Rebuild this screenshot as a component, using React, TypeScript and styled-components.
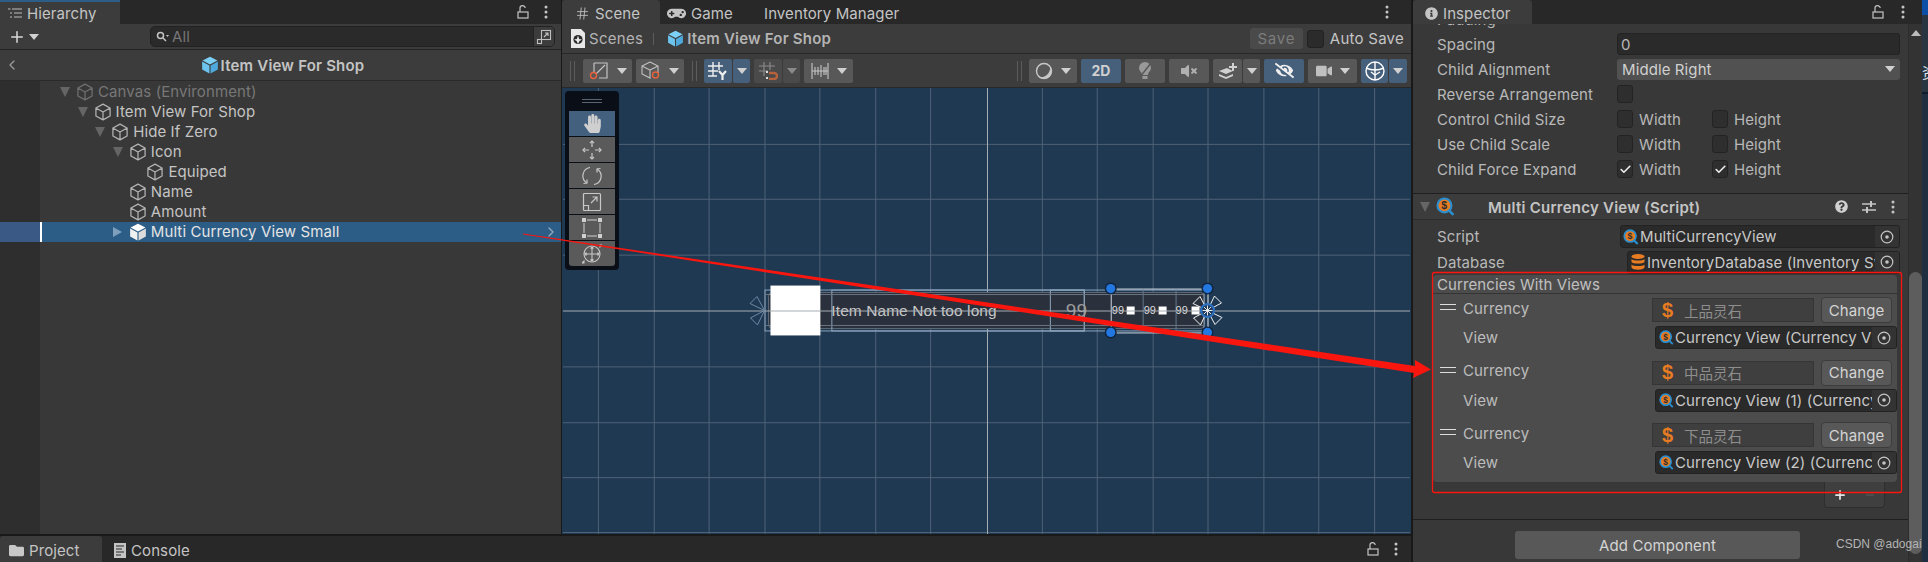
import React from "react";
import styled, { createGlobalStyle } from "styled-components";
import { FaHandPaper, FaEyeSlash, FaVideo, FaVolumeMute, FaGamepad, FaInfoCircle, FaFolder, FaQuestionCircle } from "react-icons/fa";
import { Hash, Plus, Minus, ChevronLeft, ChevronRight, Check } from "lucide-react";

const Global = createGlobalStyle`
  html, body { margin: 0; padding: 0; background: #191919; }
  body { font-family: Inter, "Noto Sans CJK SC", "Liberation Sans", sans-serif; }
  * { box-sizing: border-box; }
`;

const Page = styled.div`
  position: relative; width: 1928px; height: 562px; display: flex; overflow: hidden;
  color: #c4c4c4; font-size: 15px; letter-spacing: 0.1px; background: #191919;
`;
const Workspace = styled.div`width: 1411px; display: flex; flex-direction: column; flex: none;`;
const TopArea = styled.div`height: 534px; display: flex; gap: 1px; flex: none;`;
const TabStrip = styled.div`height: 24px; background: #282828; display: flex; align-items: stretch; flex: none; position: relative;`;
const Tab = styled.div<{ $w: number; $active?: boolean; $accent?: boolean; $pad?: number }>`
  width: ${p => p.$w}px; background: ${p => (p.$active ? "#3c3c3c" : "transparent")};
  display: flex; align-items: center; gap: 5px; padding-left: ${p => p.$pad ?? 8}px;
  border-top: 2px solid ${p => (p.$accent ? "#2c5d87" : "transparent")};
  border-radius: ${p => (p.$accent ? "0" : "3px 3px 0 0")}; white-space: nowrap; color: #c4c4c4; flex: none;
  svg { flex: none; }
`;
const TabActions = styled.div<{ $right: number; $gap: number }>`
  margin-left: auto; display: flex; align-items: center; gap: ${p => p.$gap}px; padding-right: ${p => p.$right}px;
`;
const HierarchyPanel = styled.section`width: 561px; display: flex; flex-direction: column; background: #383838; flex: none;`;
const HierarchyBar = styled.div`height: 26px; background: #3c3c3c; border-bottom: 1px solid #232323; display: flex; align-items: center; padding: 0 6px 0 8px; flex: none;`;
const AddMenu = styled.div`display: flex; align-items: center; gap: 3px; width: 142px; color: #d8d8d8;`;
const SearchBox = styled.div`
  flex: 1; height: 21px; background: #2a2a2a; border: 1px solid #222; border-radius: 5px; display: flex; align-items: center;
  padding-left: 5px; gap: 3px; color: #767676; overflow: hidden;
`;
const SearchAction = styled.div`margin-left: auto; width: 21px; height: 19px; background: #3c3c3c; border-left: 1px solid #222; display: flex; align-items: center; justify-content: center;`;
const BreadcrumbBar = styled.div`
  height: 31px; display: grid; grid-template-columns: 1fr auto 1fr; align-items: center; background: #3c3c3c; border-bottom: 1px solid #2a2a2a;
  padding-left: 4px; flex: none; font-weight: 600; letter-spacing: 0.2px; color: #c4c4c4;
`;
const Crumb = styled.div`display: flex; align-items: center; gap: 2px;`;
const TreeArea = styled.div`flex: 1; display: flex; flex-direction: column; background: linear-gradient(90deg, #2e2e2e 40px, #383838 40px); padding-top: 1px;`;
const TreeRow = styled.div<{ $depth: number; $selected?: boolean; $dim?: boolean }>`
  height: 20px; display: flex; align-items: center; padding-left: ${p => 60 + p.$depth * 17.6}px; position: relative;
  color: ${p => (p.$selected ? "#e4e4e4" : p.$dim ? "#777" : "#c4c4c4")};
  background: ${p => (p.$selected ? "linear-gradient(90deg, #3a5a85 40px, #fff 40px, #fff 42px, #2c5d87 42px)" : "transparent")};
  flex: none;
`;
const Arrow = styled.span<{ $open?: boolean; $color?: string; $hidden?: boolean }>`
  width: 16px; height: 10px; flex: none; position: relative; visibility: ${p => (p.$hidden ? "hidden" : "visible")};
  &::before { content: ""; position: absolute; left: 0; top: 0; border-style: solid;
    border-width: ${p => (p.$open ? "10px 5px 0 5px" : "5px 0 5px 9px")};
    border-color: ${p => (p.$open ? `${p.$color ?? "#656565"} transparent transparent transparent` : `transparent transparent transparent ${p.$color ?? "#656565"}`)}; }
`;
const RowLabel = styled.span`margin-left: 4px; white-space: nowrap; position: relative; top: -1px;`;
const RowChevron = styled.span`position: absolute; right: 2px; top: 2px; color: #93a9bd; display: flex;`;
const ScenePanel = styled.section`width: 849px; display: flex; flex-direction: column; flex: none;`;
const SceneCrumbs = styled.div`height: 30px; background: #3c3c3c; display: flex; align-items: center; padding-left: 8px; flex: none; border-bottom: 1px solid #282828;`;
const CrumbText = styled.span<{ $bold?: boolean; $ml: number }>`font-weight: ${p => (p.$bold ? 600 : 400)}; color: #b4b4b4; margin-left: ${p => p.$ml}px; letter-spacing: ${p => (p.$bold ? 0.2 : 0.3)}px; white-space: nowrap;`;
const CrumbDivider = styled.span`width: 1px; height: 12px; background: #5c5c5c; margin: 0 13px 0 10px;`;
const SaveGroup = styled.div`margin-left: auto; display: flex; align-items: center; padding-right: 7px;`;
const SaveButton = styled.div`width: 53px; height: 21px; background: #4a4a4a; border-radius: 3px; color: #7c7c7c; display: flex; align-items: center; justify-content: center; margin-right: 4px; letter-spacing: 0.8px;`;
const AutoBox = styled.div`width: 17px; height: 18px; background: #2b2b2b; border: 1px solid #222; border-radius: 3px; margin-right: 6px;`;
const AutoLabel = styled.span`letter-spacing: 0.25px; white-space: nowrap;`;
const SceneToolbar = styled.div`height: 34px; background: #3c3c3c; display: flex; align-items: center; justify-content: space-between; padding: 0 4px 0 8px; flex: none; border-bottom: 1px solid #282828;`;
const ToolGroup = styled.div`display: flex; align-items: center; gap: 4px;`;
const Grip = styled.span<{ $ml?: number; $mr?: number }>`width: 5px; height: 20px; border-left: 1px solid #5c5c5c; border-right: 1px solid #5c5c5c; margin-left: ${p => p.$ml ?? 0}px; margin-right: ${p => p.$mr ?? 0}px;`;
const ToolButton = styled.div<{ $w: number; $active?: boolean; $dark?: boolean }>`
  width: ${p => p.$w}px; height: 24px; border-radius: 2px; display: flex; align-items: center; justify-content: center; gap: 8px; flex: none;
  background: ${p => (p.$active ? "#46607c" : p.$dark ? "#4a4a4a" : "#585858")}; color: #d0d0d0; font-weight: 700; font-size: 14px;
`;
const SplitPair = styled.div`display: flex; gap: 1px;`;
const Caret = styled.span<{ $dim?: boolean }>`width: 0; height: 0; border-style: solid; border-width: 6px 5px 0 5px; border-color: ${p => (p.$dim ? "#8a8a8a" : "#d0d0d0")} transparent transparent transparent;`;
const SceneView = styled.div`flex: 1; position: relative; background: #1f3953; overflow: hidden;`;
const SceneCanvas = styled.svg`position: absolute; inset: 0; width: 100%; height: 100%;`;
const Overlay = styled.div`
  position: absolute; left: 3px; top: 3px; width: 54px; height: 179px; background: #0a0e16; border-radius: 4px; padding: 8px 4px 4px;
  display: flex; flex-direction: column; gap: 1px;
`;
const OverlayGrip = styled.div`height: 4px; width: 20px; border-top: 1px solid #5c6470; border-bottom: 1px solid #5c6470; margin: 0 auto 7px; flex: none;`;
const OverlayTool = styled.div<{ $active?: boolean }>`
  height: 25px; background: ${p => (p.$active ? "#44607f" : "#5a5a5a")}; display: flex; align-items: center; justify-content: center; color: #c8c8c8; flex: none;
  &:first-of-type { border-radius: 3px 3px 0 0; } &:last-of-type { border-radius: 0 0 3px 3px; }
`;
const BottomTabs = styled.div`height: 28px; margin-top: 0; background: #282828; border-top: 2px solid #191919; display: flex; align-items: stretch; flex: none;`;
const Inspector = styled.section`width: 509px; flex: none; display: flex; flex-direction: column; background: #383838; margin-left: 2px;`;
const InspectorBody = styled.div`flex: 1; display: flex; min-height: 0;`;
const InspectorContent = styled.div`flex: 1; min-width: 0; overflow: hidden; display: flex; flex-direction: column;`;
const PropRow = styled.div<{ $first?: boolean }>`
  height: 25px; display: flex; align-items: center; padding: 0 8px 3px 24px; flex: none; margin-top: ${p => (p.$first ? -16 : 0)}px; color: #b8b8b8;
`;
const PropLabel = styled.span`width: 180px; flex: none; white-space: nowrap;`;
const NumberField = styled.div`flex: 1; height: 22px; background: #2a2a2a; border: 1px solid #222; border-radius: 3px; padding-left: 3px; display: flex; align-items: center;`;
const Dropdown = styled.div`flex: 1; height: 21px; background: #515151; border-radius: 3px; padding: 0 5px 0 5px; display: flex; align-items: center; justify-content: space-between; color: #d0d0d0;`;
const CheckBox = styled.div`width: 16px; height: 18px; background: #2e2e2e; border: 1px solid #232323; border-radius: 3px; display: flex; align-items: center; justify-content: center; color: #eee; flex: none;`;
const CheckLabel = styled.span<{ $w: number }>`margin-left: 6px; width: ${p => p.$w}px; flex: none;`;
const ComponentHeader = styled.div`
  height: 27px; margin-top: 10px; border-top: 1px solid #1f1f1f; border-bottom: 1px solid #2e2e2e; background: #3c3c3c; display: flex; align-items: center; padding-left: 7px; flex: none; font-weight: 600; color: #c4c4c4; letter-spacing: 0.25px;
`;
const HeaderTitle = styled.span`margin-left: 33px; flex: 1; white-space: nowrap; position: relative; top: 1px;`;
const HeaderIcons = styled.div`display: flex; align-items: center; gap: 14px; padding-right: 12px;`;
const ScriptRow = styled.div<{ $h: number; $mt?: number }>`height: ${p => p.$h}px; margin-top: ${p => p.$mt ?? 0}px; display: flex; align-items: center; padding: 0 8px 0 24px; flex: none; color: #b8b8b8;`;
const ObjectField = styled.div<{ $offset?: number; $w?: number }>`
  ${p => (p.$w ? `width:${p.$w}px; margin-left:auto; flex:none;` : `flex:1; margin-left:${p.$offset ?? 0}px; min-width:0;`)}
  height: 23px; background: #2a2a2a; border: 1px solid #222; border-radius: 3px; display: flex; align-items: center; overflow: hidden; color: #c8c8c8;
`;
const ObjectIcon = styled.span`flex: none; width: 19px; display: flex; justify-content: center; padding-left: 1px;`;
const ObjectName = styled.span`flex: 1; min-width: 0; white-space: nowrap; overflow: hidden;`;
const TargetSlot = styled.span`flex: none; width: 24px; height: 100%; background: #333; display: flex; align-items: center; justify-content: center;`;
const ListBox = styled.div`margin: 2px 11px 0 20px; height: 207px; background: #4c4c4c; border-radius: 4px; flex: none; display: flex; flex-direction: column;`;
const ListHeader = styled.div`height: 19px; border-bottom: 1px solid #343434; padding-left: 4px; display: flex; align-items: center; flex: none; color: #c0c0c0;`;
const ListBody = styled.div`padding-top: 3px; display: flex; flex-direction: column; gap: 10.5px;`;
const ListElement = styled.div`display: flex; flex-direction: column; gap: 3px;`;
const CurrencyRow = styled.div`height: 26px; display: flex; align-items: center; padding: 0 5px 0 7px; color: #bcbcbc;`;
const CurrencyLabel = styled.span`position: relative; top: -2px;`;
const ViewRow = styled.div`height: 23px; display: flex; align-items: center; padding-left: 30px; color: #bcbcbc;`;
const DragHandle = styled.span`width: 16px; height: 6px; border-top: 1.5px solid #ddd; border-bottom: 1.5px solid #ddd; margin: 0 7px 6px 0; flex: none;`;
const CurrencyField = styled.div`width: 162px; height: 24px; margin-left: auto; background: #3f3f3f; border: 1px solid #353535; display: flex; align-items: center; padding-left: 9px; color: #8e8e8e; flex: none;`;
const DollarSign = styled.span`color: #e87c22; font: 700 20px "Liberation Sans", sans-serif; width: 22px; flex: none;`;
const CurrencyName = styled.span`font-size: 14.5px; letter-spacing: 0; font-family: "Noto Sans CJK SC", sans-serif;`;
const ChangeButton = styled.div`width: 71px; height: 26px; margin-left: 7px; background: #585858; border: 1px solid #3c3c3c; border-radius: 4px; display: flex; align-items: center; justify-content: center; color: #d4d4d4; flex: none;`;
const ListFooter = styled.div`width: 61px; height: 26px; margin-left: 411px; background: #3f3f3f; border: 1px solid #2e2e2e; border-top: none; border-radius: 0 0 4px 4px; display: flex; align-items: center; justify-content: space-around; flex: none; color: #e4e4e4;`;
const FooterRule = styled.div`height: 1px; background: #1f1f1f; margin-top: 11px; flex: none;`;
const AddRow = styled.div`flex: 1; display: flex; padding: 11px 0 0 102px;`;
const AddButton = styled.div`width: 285px; height: 28px; background: #585858; border-radius: 3px; display: flex; align-items: center; justify-content: center; color: #d4d4d4;`;
const Watermark = styled.span`position: absolute; left: 1836px; top: 537px; font: 12px "Liberation Sans", sans-serif; color: #b4b4b4; letter-spacing: 0; white-space: nowrap;`;
const Scrollbar = styled.div`width: 14px; flex: none; background: #333; border-left: 1px solid #2d2d2d; display: flex; flex-direction: column; align-items: center; padding-top: 6px; position: relative;`;
const ScrollUp = styled.span`width: 0; height: 0; border-style: solid; border-width: 0 5px 6px 5px; border-color: transparent transparent #bcbcbc transparent;`;
const ScrollThumb = styled.div`position: absolute; left: 0; right: 0; top: 248px; bottom: 8px; background: #5d5d5d; border-radius: 7px;`;
const DesktopEdge = styled.div`flex: 1; background: linear-gradient(180deg, #0d4ea6 0, #0d4ea6 15px, #2a3542 15px, #2a3542 92px, #0f1c2c 92px, #0f1c2c 94px, #202e42 94px); position: relative;`;
const EdgeGlyph = styled.span`position: absolute; left: 0; top: 62px; width: 8px; overflow: hidden; color: #dfe6ee; font: 15px "Noto Sans CJK SC", sans-serif; line-height: 20px; white-space: nowrap;`;
const Annotation = styled.svg`position: absolute; left: 0; top: 0; width: 1928px; height: 562px; pointer-events: none;`;

const Cube = ({ size = 18, color = "#b4b4b4" }: { size?: number; color?: string }) => (
  <svg width={size} height={size} viewBox="0 0 16 16" fill="none" stroke={color} strokeWidth="1.1" style={{ flex: "none" }}>
    <path d="M8 1 14.3 4.4V11.6L8 15 1.7 11.6V4.4Z M1.7 4.4 8 8 14.3 4.4 M8 8V15" strokeLinejoin="round" />
  </svg>
);
const FilledCube = ({ size = 18, top = "#7dd0f5", left = "#6cc4ee", right = "#4fa9dc" }: { size?: number; top?: string; left?: string; right?: string }) => (
  <svg width={size} height={size} viewBox="0 0 16 16" style={{ flex: "none" }}>
    <path d="M8 .6 14.6 4 8 7.5 1.4 4Z" fill={top} />
    <path d="M1 4.9 7.5 8.4V15.6L1 12Z" fill={left} />
    <path d="M15 4.9 8.5 8.4V15.6L15 12Z" fill={right} />
  </svg>
);
const Kebab = ({ color = "#c4c4c4" }: { color?: string }) => (
  <svg width="6" height="14" viewBox="0 0 6 14" fill={color} style={{ flex: "none" }}><circle cx="3" cy="2" r="1.5" /><circle cx="3" cy="7" r="1.5" /><circle cx="3" cy="12" r="1.5" /></svg>
);
const Lock = () => (
  <svg width="12" height="14" viewBox="0 0 12 14" fill="none" stroke="#c4c4c4" strokeWidth="1.2"><rect x="1" y="7" width="10" height="6" /><path d="M3 7V3.5A2.6 2.6 0 0 1 8.2 3" /></svg>
);
const HierarchyIcon = () => (
  <svg width="14" height="12" viewBox="0 0 14 12" stroke="#bbb" strokeWidth="1.2"><path d="M4 2H14M6 6H14M6 10H14" /><path d="M0 2H2.5M2 6H4M2 10H4" /></svg>
);
const SearchIcon = () => (
  <svg width="13" height="12" viewBox="0 0 13 12" fill="none" stroke="#c4c4c4" strokeWidth="1.5"><circle cx="4.5" cy="4.5" r="3" /><path d="M7 7 10 10" /><path d="M10 4H13L11.5 6Z" fill="#c4c4c4" stroke="none" /></svg>
);
const ExpandIcon = () => (
  <svg width="16" height="16" viewBox="0 0 16 16" fill="none" stroke="#c0c0c0" strokeWidth="1.1"><rect x="5.5" y="1.5" width="9" height="9" /><rect x="1.5" y="10.5" width="4" height="4" /><path d="M8 8 12 4M9 4H12V7" /></svg>
);
const SceneFileIcon = () => (
  <svg width="16" height="19" viewBox="0 0 16 19"><path d="M1 0H11L15 4V19H1Z" fill="#e8e8e8" /><circle cx="8" cy="10.5" r="4.6" fill="#2a2a2a" /><path d="M8 6.5 9.2 10 12 10.6 9.5 12 8 15 6.6 12 4 10.6 6.8 10Z" fill="#e8e8e8" /></svg>
);
const RectOrangeIcon = () => (
  <svg width="20" height="18" viewBox="0 0 20 18" fill="none"><path d="M5 1H18V16H10" stroke="#c4c4c4" strokeWidth="1.2" /><path d="M5 1V10M7 12 16 3" stroke="#c4c4c4" strokeWidth="1.2" /><circle cx="4.5" cy="13.5" r="3" stroke="#e8623a" strokeWidth="1.4" /></svg>
);
const CubeOrangeIcon = () => (
  <svg width="20" height="19" viewBox="0 0 20 19" fill="none" stroke="#c4c4c4" strokeWidth="1.1"><path d="M9 1 17 5V12M9 9 17 5M9 1 1 5V13L9 17V9L1 5" /><circle cx="14.5" cy="14" r="3" stroke="#e8623a" strokeWidth="1.4" /></svg>
);
const GridYIcon = () => (
  <svg width="20" height="18" viewBox="0 0 20 18" fill="none" stroke="#eee" strokeWidth="1.4"><path d="M5 0V14M11 0V8M0 4H15M0 9H10M0 14H9" /><path d="M11 9 14.5 13 18 9M14.5 13V18" strokeWidth="2.2" /></svg>
);
const GridMagnetIcon = () => (
  <svg width="20" height="18" viewBox="0 0 20 18" fill="none"><path d="M6 0V14M12 0V8M1 4H17M1 9H10" stroke="#8c8c8c" strokeWidth="1.1" /><path d="M11 11H16A3 3 0 0 1 16 17H11" stroke="#b8623c" strokeWidth="2.4" /><rect x="8" y="9" width="2" height="2" fill="#ddd" /><rect x="8" y="15" width="2" height="2" fill="#ddd" /></svg>
);
const RulerIcon = () => (
  <svg width="18" height="18" viewBox="0 0 18 18" stroke="#c8c8c8" strokeWidth="1.1"><path d="M1 1V17M17 1V17M1 9H17M4 5V13M7 5V13M10 3V15M13 5V13M15 5V13" /></svg>
);
const OrbIcon = () => (
  <svg width="18" height="18" viewBox="0 0 18 18" fill="none"><circle cx="9" cy="9" r="7.5" stroke="#c8c8c8" strokeWidth="1.4" /><path d="M2 13C5 17 14 16 15.500 5C17.500 9 17 14 13 16C9 18 4 17 2 13Z" fill="#c8c8c8" /></svg>
);
const LightIcon = () => (
  <svg width="16" height="18" viewBox="0 0 16 18"><path d="M8 0A6 6 0 0 1 14 6C14 9 11 10 11 13H5C5 10 2 9 2 6A6 6 0 0 1 8 0Z" fill="#999" /><rect x="5.5" y="14" width="5" height="3" fill="#999" /><path d="M14 1 3 15" stroke="#585858" strokeWidth="1.5" /></svg>
);
const LayersIcon = () => (
  <svg width="20" height="18" viewBox="0 0 20 18" fill="#d0d0d0"><path d="M1 9 9 6 15 9 8 12Z" /><path d="M1 12 8 15 15 12V14L8 17 1 14Z" /><path d="M14 1H16V4H19V6H16V9H14V6H11V4H14Z" /></svg>
);
const GizmoIcon = () => (
  <svg width="22" height="22" viewBox="0 0 22 22" fill="none" stroke="#fff" strokeWidth="1.4"><circle cx="11" cy="11" r="9" /><path d="M2 8Q11 12 20 8M11 2V20" /><path d="M7 12 11 15 16 12" /></svg>
);
const MoveIcon = () => (
  <svg width="20" height="20" viewBox="0 0 20 20" fill="none" stroke="#c8c8c8" strokeWidth="1.2"><path d="M10 1V7M10 13V19M1 10H7M13 10H19" /><path d="M8 3 10 1 12 3M8 17 10 19 12 17M3 8 1 10 3 12M17 8 19 10 17 12" /></svg>
);
const RotateIcon = () => (
  <svg width="20" height="20" viewBox="0 0 20 20" fill="none" stroke="#c8c8c8" strokeWidth="1.2"><path d="M8 1.500A8.400 8.400 0 0 0 5 17" /><path d="M12 18.500A8.400 8.400 0 0 0 15 3" /><path d="M1.500 17.500 5 17 5 13.500M18.500 2.500 15 3 15 6.500" /></svg>
);
const ScaleIcon = () => (
  <svg width="20" height="20" viewBox="0 0 20 20" fill="none" stroke="#c8c8c8" strokeWidth="1.2"><rect x="1.500" y="1.500" width="17" height="17" rx="1" /><path d="M1.500 13.500H6.500V18.500" /><path d="M9 11 15 5M10.500 5H15V9.500" /></svg>
);
const RectToolIcon = () => (
  <svg width="20" height="20" viewBox="0 0 20 20" fill="#d0d0d0" stroke="none"><path d="M0 0H4V4H0ZM16 0H20V4H16ZM0 16H4V20H0ZM16 16H20V20H16ZM5 1.500H15V2.500H5ZM5 17.500H15V18.500H5ZM1.500 5H2.500V15H1.500ZM17.500 5H18.500V15H17.500Z" /></svg>
);
const TransformIcon = () => (
  <svg width="20" height="20" viewBox="0 0 20 20" fill="none" stroke="#c8c8c8" strokeWidth="1.1"><circle cx="10" cy="10" r="8" /><path d="M10 3V17M3 10H17M8.500 4.500 10 3 11.500 4.500M8.500 15.500 10 17 11.500 15.500M4.500 8.500 3 10 4.500 11.500M15.500 8.500 17 10 15.500 11.500" /><path d="M0 19H2V17ZM20 1H18V3Z" fill="#c8c8c8" /></svg>
);
const ConsoleIcon = () => (
  <svg width="12" height="15" viewBox="0 0 12 15"><rect width="12" height="15" fill="#c4c4c4" /><path d="M2 3H10M2 6H8M2 9H10M2 12H7" stroke="#282828" strokeWidth="1.2" /></svg>
);
const SlidersIcon = () => (
  <svg width="14" height="14" viewBox="0 0 14 14" stroke="#c4c4c4" strokeWidth="1.4"><path d="M0 4H14M0 10H14" /><rect x="8" y="1" width="2" height="6" fill="#c4c4c4" stroke="none" /><rect x="4" y="7" width="2" height="6" fill="#c4c4c4" stroke="none" /></svg>
);
const MoneyScript = ({ size = 18 }: { size?: number }) => (
  <svg width={size} height={size} viewBox="0 0 18 18" style={{ flex: "none" }}>
    <path d="M12 12.500 16.500 17" stroke="#2a8fd0" strokeWidth="2.400" />
    <circle cx="8" cy="8" r="6.600" fill="#e87c22" stroke="#2a8fd0" strokeWidth="2" />
    <text x="8" y="11.500" textAnchor="middle" fontSize="10" fontWeight="700" fontFamily="Liberation Sans" fill="#2d2d2d">$</text>
  </svg>
);
const DatabaseIcon = () => (
  <svg width="14" height="16" viewBox="0 0 14 16" fill="#e87c22"><ellipse cx="7" cy="2.500" rx="6.500" ry="2.500" /><path d="M.5 5C2 7 12 7 13.500 5V8C12 10 2 10 .5 8ZM.5 10.500C2 12.500 12 12.500 13.500 10.500V13.500C12 16.500 2 16.500 .5 13.500Z" /></svg>
);
const Target = () => (
  <svg width="14" height="14" viewBox="0 0 14 14" fill="none"><circle cx="7" cy="7" r="5.800" stroke="#c4c4c4" strokeWidth="1.200" /><circle cx="7" cy="7" r="1.800" fill="#c4c4c4" /></svg>
);

const verticals = [597, 653, 708, 764, 819, 875, 930, 1042, 1097, 1153, 1208, 1264, 1319, 1375];
const horizontals = [144, 199, 255, 367, 423, 478, 533];
const Petal = ({ cx, cy, rot, color, w = 1 }: { cx: number; cy: number; rot: number; color: string; w?: number }) => (
  <path d="M0 0 -7.500 -14 -14.500 -7Z" transform={`translate(${cx} ${cy}) rotate(${rot})`} fill="none" stroke={color} strokeWidth={w} />
);

const SceneDrawing = () => (
  <SceneCanvas viewBox="562 88 849 447">
    {verticals.map(x => <line key={x} x1={x + 0.5} x2={x + 0.5} y1={88} y2={535} stroke="#4f6276" />)}
    {horizontals.map(y => <line key={y} y1={y + 0.5} y2={y + 0.5} x1={562} x2={1411} stroke="#4f6276" />)}
    <line x1={987.5} x2={987.5} y1={88} y2={535} stroke="#a8aeb4" />
    <path d="M768 297a4 4 0 0 1 4-4H1201a4 4 0 0 1 4 4V325a4 4 0 0 1-4 4H772a4 4 0 0 1-4-4Z" fill="#2a303c" stroke="#5f6a76" />
    <g fill="none" stroke="#8ea4ba">
      <rect x="764.500" y="290.500" width="440" height="41" />
      <rect x="831.500" y="290.500" width="253" height="41" />
      <rect x="1050.500" y="290.500" width="34" height="41" />
      <path d="M764 295H1205M764 326H1205" stroke="#6a7683" />
      <line x1="1111" x2="1208" y1="289.500" y2="289.500" stroke="#cfd8e2" />
      <line x1="1111" x2="1208" y1="333.500" y2="333.500" stroke="#cfd8e2" />
      <line x1="1111.500" x2="1111.500" y1="289" y2="333" stroke="#cfd8e2" />
      <line x1="1208.500" x2="1208.500" y1="289" y2="333" stroke="#cfd8e2" />
      <line x1="1143.500" x2="1143.500" y1="290" y2="332" stroke="#66778a" />
      <line x1="1176.500" x2="1176.500" y1="290" y2="332" stroke="#66778a" />
    </g>
    <rect x="770" y="286" width="50" height="50" fill="#fff" />
    <text x="831" y="316.500" fontFamily="Liberation Sans" fontSize="15.500" fill="#c8c8c8">Item Name Not too long</text>
    <text x="1066" y="318" fontFamily="Liberation Sans" fontSize="19" fill="#9a9a9a">99</text>
    {[1112, 1144, 1176].map(x => <text key={x} x={x} y={315} fontFamily="Liberation Sans" fontSize="11" fill="#ddd">99</text>)}
    {[1127, 1159, 1192].map(x => <rect key={x} x={x} y={307} width={8} height={8} fill="#fff" />)}
    <line x1={562} x2={1411} y1={311.5} y2={311.500} stroke="#a8aeb4" />
    <Petal cx={764} cy={311} rot={0} color="#6f8aa6" />
    <Petal cx={764} cy={311} rot={270} color="#6f8aa6" />
    {[[1111, 289], [1208, 289], [1111, 333], [1208, 333]].map(([x, y]) => (
      <g key={`${x}${y}`}><circle cx={x} cy={y} r={6} fill="#10243c" /><circle cx={x} cy={y} r={4.600} fill="#2377e0" /></g>
    ))}
    {[0, 90, 180, 270].map(r => <Petal key={r} cx={1208} cy={311} rot={r} color="#f2f2f2" />)}
    <circle cx={1208} cy={311} r={6.500} fill="#1e3c5e" stroke="#2f73c4" strokeWidth="2" />
    <path d="M1208 306V316M1203 311H1213M1204.500 307.500 1211.500 314.500M1211.500 307.500 1204.500 314.500" stroke="#e8e8e8" />
  </SceneCanvas>
);

const rowsData: { label: string; depth: number; open?: boolean; noArrow?: boolean; dim?: boolean }[] = [
  { label: "Canvas (Environment)", depth: 0, open: true, dim: true },
  { label: "Item View For Shop", depth: 1, open: true },
  { label: "Hide If Zero", depth: 2, open: true },
  { label: "Icon", depth: 3, open: true },
  { label: "Equiped", depth: 4, noArrow: true },
  { label: "Name", depth: 3, noArrow: true },
  { label: "Amount", depth: 3, noArrow: true },
];

const Hierarchy = () => (
  <HierarchyPanel>
    <TabStrip>
      <Tab $w={120} $active $accent>
        <HierarchyIcon />Hierarchy
      </Tab>
      <TabActions $right={12} $gap={14}><Lock /><Kebab /></TabActions>
    </TabStrip>
    <HierarchyBar>
      <AddMenu><Plus size={18} strokeWidth={2} /><Caret /></AddMenu>
      <SearchBox><SearchIcon />All<SearchAction><ExpandIcon /></SearchAction></SearchBox>
    </HierarchyBar>
    <BreadcrumbBar>
      <ChevronLeft size={16} color="#9a9a9a" />
      <Crumb><FilledCube size={18} />Item View For Shop</Crumb>
    </BreadcrumbBar>
    <TreeArea>
      {rowsData.map(r => (
        <TreeRow key={r.label} $depth={r.depth} $dim={r.dim}>
          <Arrow $open={r.open} $hidden={r.noArrow} />
          <Cube color={r.dim ? "#707070" : "#b4b4b4"} />
          <RowLabel>{r.label}</RowLabel>
        </TreeRow>
      ))}
      <TreeRow $depth={3} $selected>
        <Arrow $color="#7f9fbd" />
        <FilledCube top="#fff" left="#f0f0f0" right="#dcdcdc" />
        <RowLabel>Multi Currency View Small</RowLabel>
        <RowChevron><ChevronRight size={16} /></RowChevron>
      </TreeRow>
    </TreeArea>
  </HierarchyPanel>
);

const Scene = () => (
  <ScenePanel>
    <TabStrip>
      <Tab $w={98} $active $pad={13}><Hash size={15} strokeWidth={1.500} color="#bbb" />Scene</Tab>
      <Tab $w={104} $pad={7}><FaGamepad size={19} color="#c4c4c4" />Game</Tab>
      <Tab $w={150} $pad={0}>Inventory Manager</Tab>
      <TabActions $right={21} $gap={0}><Kebab /></TabActions>
    </TabStrip>
    <SceneCrumbs>
      <SceneFileIcon />
      <CrumbText $ml={3}>Scenes</CrumbText>
      <CrumbDivider />
      <FilledCube size={17} />
      <CrumbText $bold $ml={3}>Item View For Shop</CrumbText>
      <SaveGroup>
        <SaveButton>Save</SaveButton>
        <AutoBox />
        <AutoLabel>Auto Save</AutoLabel>
      </SaveGroup>
    </SceneCrumbs>
    <SceneToolbar>
      <ToolGroup>
        <Grip $mr={4} />
        <ToolButton $w={49}><RectOrangeIcon /><Caret /></ToolButton>
        <ToolButton $w={48}><CubeOrangeIcon /><Caret /></ToolButton>
        <Grip $ml={4} $mr={3} />
        <SplitPair><ToolButton $w={28} $active><GridYIcon /></ToolButton><ToolButton $w={17} $active><Caret /></ToolButton></SplitPair>
        <SplitPair><ToolButton $w={28} $dark><GridMagnetIcon /></ToolButton><ToolButton $w={17} $dark><Caret $dim /></ToolButton></SplitPair>
        <ToolButton $w={49}><RulerIcon /><Caret /></ToolButton>
      </ToolGroup>
      <ToolGroup>
        <Grip $mr={3} />
        <ToolButton $w={48}><OrbIcon /><Caret /></ToolButton>
        <ToolButton $w={40} $active>2D</ToolButton>
        <ToolButton $w={40}><LightIcon /></ToolButton>
        <ToolButton $w={40}><FaVolumeMute size={16} color="#b0b0b0" /></ToolButton>
        <SplitPair><ToolButton $w={29}><LayersIcon /></ToolButton><ToolButton $w={17}><Caret /></ToolButton></SplitPair>
        <ToolButton $w={40} $active><FaEyeSlash size={19} color="#eee" /></ToolButton>
        <ToolButton $w={49}><FaVideo size={16} color="#c0c0c0" /><Caret /></ToolButton>
        <SplitPair><ToolButton $w={27} $active><GizmoIcon /></ToolButton><ToolButton $w={18} $active><Caret /></ToolButton></SplitPair>
      </ToolGroup>
    </SceneToolbar>
    <SceneView>
      <SceneDrawing />
      <Overlay>
        <OverlayGrip />
        <OverlayTool $active><FaHandPaper size={19} color="#cfcfcf" /></OverlayTool>
        <OverlayTool><MoveIcon /></OverlayTool>
        <OverlayTool><RotateIcon /></OverlayTool>
        <OverlayTool><ScaleIcon /></OverlayTool>
        <OverlayTool><RectToolIcon /></OverlayTool>
        <OverlayTool><TransformIcon /></OverlayTool>
      </Overlay>
    </SceneView>
  </ScenePanel>
);

const Check2 = () => <Check size={13} strokeWidth={3} />;

const currencies = [
  { name: "上品灵石", view: "Currency View (Currency View)" },
  { name: "中品灵石", view: "Currency View (1) (Currency View)" },
  { name: "下品灵石", view: "Currency View (2) (Currency View)" },
];

const InspectorPanel = () => (
  <Inspector>
    <TabStrip>
      <Tab $w={119} $active $pad={12}><FaInfoCircle size={13} color="#c4c4c4" />Inspector</Tab>
      <TabActions $right={16} $gap={16}><Lock /><Kebab /></TabActions>
    </TabStrip>
    <InspectorBody>
      <InspectorContent>
        <PropRow $first><PropLabel>Padding</PropLabel></PropRow>
        <PropRow><PropLabel>Spacing</PropLabel><NumberField>0</NumberField></PropRow>
        <PropRow><PropLabel>Child Alignment</PropLabel><Dropdown>Middle Right<Caret /></Dropdown></PropRow>
        <PropRow><PropLabel>Reverse Arrangement</PropLabel><CheckBox /></PropRow>
        <PropRow><PropLabel>Control Child Size</PropLabel><CheckBox /><CheckLabel $w={73}>Width</CheckLabel><CheckBox /><CheckLabel $w={60}>Height</CheckLabel></PropRow>
        <PropRow><PropLabel>Use Child Scale</PropLabel><CheckBox /><CheckLabel $w={73}>Width</CheckLabel><CheckBox /><CheckLabel $w={60}>Height</CheckLabel></PropRow>
        <PropRow><PropLabel>Child Force Expand</PropLabel><CheckBox><Check2 /></CheckBox><CheckLabel $w={73}>Width</CheckLabel><CheckBox><Check2 /></CheckBox><CheckLabel $w={60}>Height</CheckLabel></PropRow>
        <ComponentHeader>
          <Arrow $open />
          <MoneyScript size={19} />
          <HeaderTitle>Multi Currency View (Script)</HeaderTitle>
          <HeaderIcons><FaQuestionCircle size={13} color="#d0d0d0" /><SlidersIcon /><Kebab /></HeaderIcons>
        </ComponentHeader>
        <ScriptRow $h={23} $mt={5}>
          <PropLabel>Script</PropLabel>
          <ObjectField $offset={3}><ObjectIcon><MoneyScript size={16} /></ObjectIcon><ObjectName>MultiCurrencyView</ObjectName><TargetSlot><Target /></TargetSlot></ObjectField>
        </ScriptRow>
        <ScriptRow $h={22} $mt={3}>
          <PropLabel>Database</PropLabel>
          <ObjectField $offset={10}><ObjectIcon><DatabaseIcon /></ObjectIcon><ObjectName>InventoryDatabase (Inventory System)</ObjectName><TargetSlot><Target /></TargetSlot></ObjectField>
        </ScriptRow>
        <ListBox>
          <ListHeader>Currencies With Views</ListHeader>
          <ListBody>
            {currencies.map(c => (
              <ListElement key={c.name}>
                <CurrencyRow>
                  <DragHandle />
                  <CurrencyLabel>Currency</CurrencyLabel>
                  <CurrencyField><DollarSign>$</DollarSign><CurrencyName>{c.name}</CurrencyName></CurrencyField>
                  <ChangeButton>Change</ChangeButton>
                </CurrencyRow>
                <ViewRow>
                  View
                  <ObjectField $w={242}><ObjectIcon><MoneyScript size={15} /></ObjectIcon><ObjectName>{c.view}</ObjectName><TargetSlot><Target /></TargetSlot></ObjectField>
                </ViewRow>
              </ListElement>
            ))}
          </ListBody>
        </ListBox>
        <ListFooter><Plus size={14} strokeWidth={3} /><Minus size={12} strokeWidth={2} color="#5e5e5e" /></ListFooter>
        <FooterRule />
        <AddRow><AddButton>Add Component</AddButton></AddRow>
      </InspectorContent>
      <Scrollbar><ScrollUp /><ScrollThumb /></Scrollbar>
    </InspectorBody>
  </Inspector>
);

export default function App() {
  return (
    <Page>
      <Global />
      <Workspace>
        <TopArea>
          <Hierarchy />
          <Scene />
        </TopArea>
        <BottomTabs>
          <Tab $w={102} $active $pad={9}><FaFolder size={15} color="#c8c8c8" />Project</Tab>
          <Tab $w={100} $pad={12}><ConsoleIcon />Console</Tab>
          <TabActions $right={12} $gap={14}><Lock /><Kebab /></TabActions>
        </BottomTabs>
      </Workspace>
      <InspectorPanel />
      <DesktopEdge><EdgeGlyph>资</EdgeGlyph></DesktopEdge>
      <Annotation viewBox="0 0 1928 562">
        <polygon points="523,233.5 1415,366 1415,360 1431,369.5 1413,378 1414,373 523,234.5" fill="#f8160f" />
        <rect x="1432.500" y="272.500" width="469" height="220" rx="2" fill="none" stroke="#f8160f" strokeWidth="1.300" />
      </Annotation>
      <Watermark>CSDN @adogai</Watermark>
    </Page>
  );
}
